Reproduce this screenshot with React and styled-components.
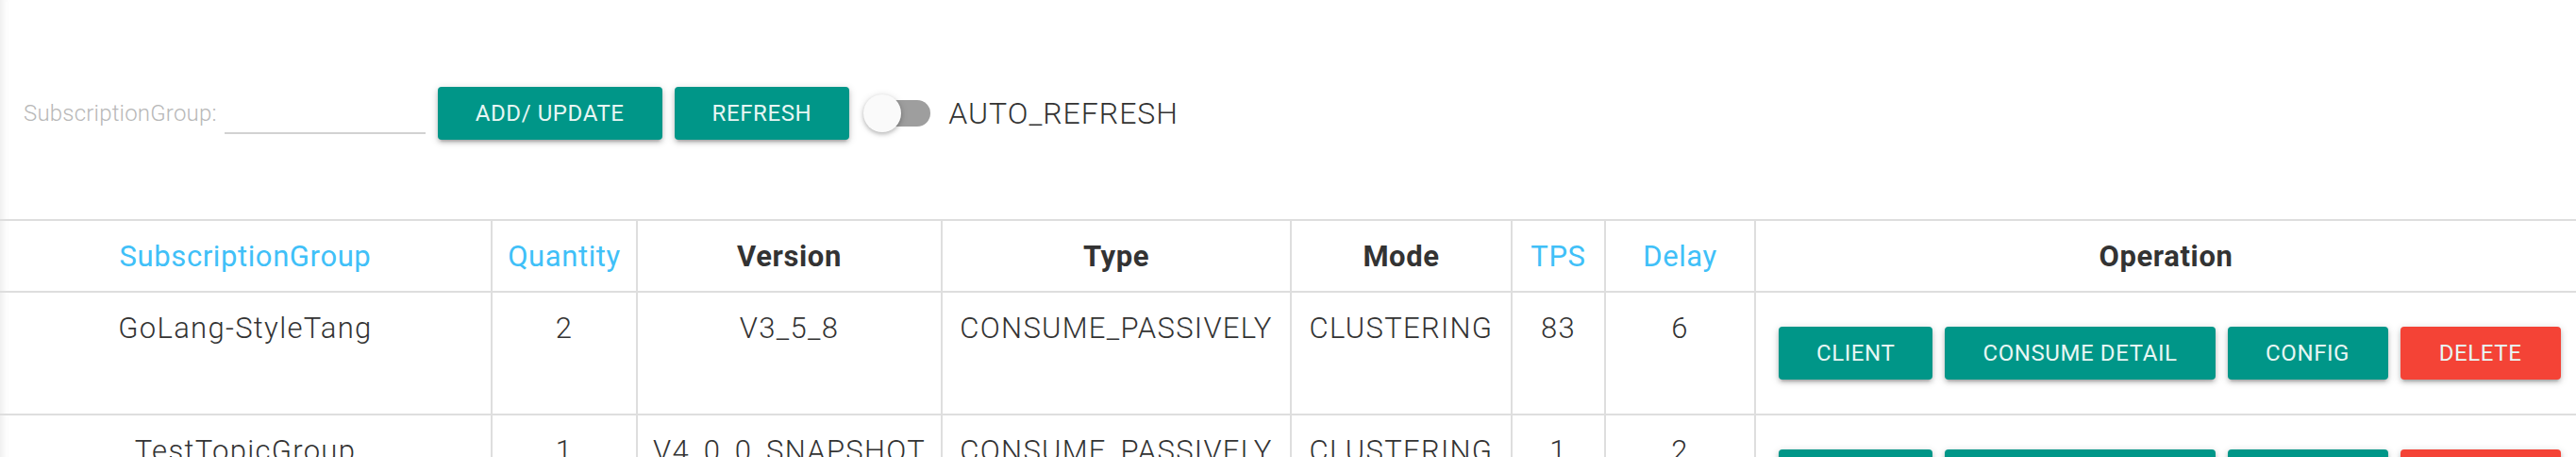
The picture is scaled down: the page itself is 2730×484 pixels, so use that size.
import styled, { createGlobalStyle } from "styled-components";
import { useState } from "react";

const GlobalStyle = createGlobalStyle`
  body {
    margin: 0;
    background: #fff;
    font-family: Roboto, "Liberation Sans", sans-serif;
    color: #333;
  }
`;

const groups = [
  {
    name: "GoLang-StyleTang",
    quantity: 2,
    version: "V3_5_8",
    type: "CONSUME_PASSIVELY",
    mode: "CLUSTERING",
    tps: 83,
    delay: 6,
  },
  {
    name: "TestTopicGroup",
    quantity: 1,
    version: "V4_0_0_SNAPSHOT",
    type: "CONSUME_PASSIVELY",
    mode: "CLUSTERING",
    tps: 1,
    delay: 2,
  },
];

const columns = [
  { title: "SubscriptionGroup", width: 521, sortable: true },
  { title: "Quantity", width: 154, sortable: true },
  { title: "Version", width: 323 },
  { title: "Type", width: 370 },
  { title: "Mode", width: 234 },
  { title: "TPS", width: 99, sortable: true },
  { title: "Delay", width: 159, sortable: true },
  { title: "Operation", width: 870 },
];

function App() {
  const [autoRefresh, setAutoRefresh] = useState(false);

  return (
    <Page>
      <GlobalStyle />
      <Toolbar>
        <FieldLabel>SubscriptionGroup:</FieldLabel>
        <FieldInput type="text" />
        <Button>ADD/ UPDATE</Button>
        <Button>REFRESH</Button>
        <Switch onClick={() => setAutoRefresh(!autoRefresh)}>
          <Track $on={autoRefresh}>
            <Thumb $on={autoRefresh} />
          </Track>
          <SwitchText>AUTO_REFRESH</SwitchText>
        </Switch>
      </Toolbar>

      <Table>
        <colgroup>
          {columns.map((col) => (
            <col key={col.title} style={{ width: col.width }} />
          ))}
        </colgroup>
        <thead>
          <tr>
            {columns.map((col) => (
              <HeadCell key={col.title} $sortable={col.sortable}>
                {col.title}
              </HeadCell>
            ))}
          </tr>
        </thead>
        <tbody>
          {groups.map((g) => (
            <tr key={g.name}>
              <Cell>{g.name}</Cell>
              <Cell>{g.quantity}</Cell>
              <Cell>{g.version}</Cell>
              <Cell>{g.type}</Cell>
              <Cell>{g.mode}</Cell>
              <Cell>{g.tps}</Cell>
              <Cell>{g.delay}</Cell>
              <OpCell>
                <OpGroup>
                  <Button>CLIENT</Button>
                  <Button>CONSUME DETAIL</Button>
                  <Button $wide>CONFIG</Button>
                  <Button $wide $danger>
                    DELETE
                  </Button>
                </OpGroup>
              </OpCell>
            </tr>
          ))}
        </tbody>
      </Table>
    </Page>
  );
}

const Page = styled.div`
  min-height: 484px;
  box-shadow: inset 12px 0 12px -12px rgba(0, 0, 0, 0.12);
`;

const Toolbar = styled.div`
  display: flex;
  align-items: center;
  gap: 13px;
  height: 56px;
  padding: 92px 0 84px 25px;
`;

const FieldLabel = styled.span`
  font-size: 24px;
  font-weight: 300;
  letter-spacing: 0.2px;
  color: #b8b8b8;
  margin-right: -5px;
`;

const FieldInput = styled.input`
  width: 213px;
  height: 38px;
  margin-top: 4px;
  padding: 0;
  border: none;
  border-bottom: 2px solid #d2d2d2;
  background: transparent;
  outline: none;
  font-family: inherit;
  font-size: 24px;
`;

const Button = styled.button`
  flex-shrink: 0;
  box-sizing: border-box;
  height: 56px;
  min-width: ${(p) => (p.$wide ? "170px" : "0")};
  padding: 0 40px;
  border: none;
  border-radius: 4px;
  background: ${(p) => (p.$danger ? "#f44336" : "#009688")};
  color: #e8f6f4;
  font-family: Roboto, "Liberation Sans", sans-serif;
  font-size: 24px;
  font-weight: 400;
  letter-spacing: 0.6px;
  white-space: nowrap;
  cursor: pointer;
  box-shadow: 0 3px 4px rgba(0, 0, 0, 0.14), 0 5px 2px -3px rgba(0, 0, 0, 0.12),
    0 2px 8px rgba(0, 0, 0, 0.18);
`;

const Switch = styled.label`
  display: flex;
  align-items: center;
  gap: 19px;
  margin-left: 8px;
  cursor: pointer;
`;

const Track = styled.span`
  position: relative;
  display: inline-block;
  width: 65px;
  height: 28px;
  border-radius: 14px;
  background: ${(p) => (p.$on ? "#80cbc4" : "#9e9e9e")};
`;

const Thumb = styled.span`
  position: absolute;
  top: -6px;
  left: ${(p) => (p.$on ? "31px" : "-6px")};
  width: 40px;
  height: 40px;
  border-radius: 50%;
  background: ${(p) => (p.$on ? "#009688" : "#fafafa")};
  box-shadow: 0 2px 4px rgba(0, 0, 0, 0.22), 0 1px 8px rgba(0, 0, 0, 0.12);
`;

const SwitchText = styled.span`
  font-size: 32px;
  font-weight: 300;
  letter-spacing: 1px;
  color: #333;
`;

const Table = styled.table`
  width: 2730px;
  table-layout: fixed;
  border-collapse: collapse;
  border-top: 2px solid #dedede;

  td,
  th {
    border: 2px solid #dedede;
  }
  tr > :first-child {
    border-left: none;
  }
  tr > :last-child {
    border-right: none;
  }
`;

const HeadCell = styled.th`
  height: 74px;
  padding: 0 4px;
  text-align: center;
  vertical-align: middle;
  font-size: 31px;
  letter-spacing: 0.6px;
  font-weight: ${(p) => (p.$sortable ? 400 : 700)};
  color: ${(p) => (p.$sortable ? "#40c0f8" : "#333")};
  white-space: nowrap;
`;

const Cell = styled.td`
  padding: 15px 4px 0;
  vertical-align: top;
  text-align: center;
  font-size: 31px;
  font-weight: 300;
  letter-spacing: 1.3px;
  line-height: 45px;
  color: #333;
  white-space: nowrap;
`;

const OpCell = styled.td`
  padding: 36px 0 36px 24px;
  vertical-align: middle;
  overflow: hidden;
`;

const OpGroup = styled.div`
  display: flex;
  gap: 13px;
`;

export default App;
